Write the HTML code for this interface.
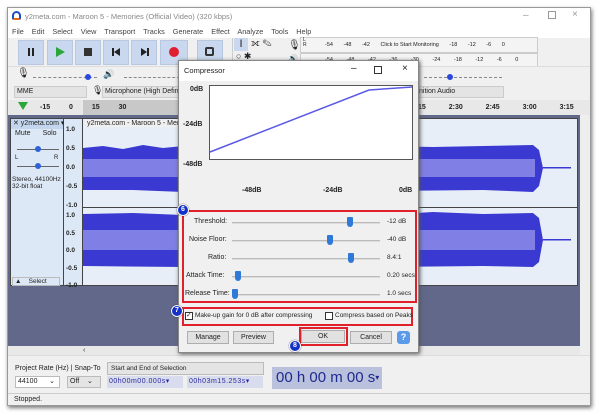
<!DOCTYPE html>
<html><head><meta charset="utf-8"><style>
*{box-sizing:border-box;margin:0;padding:0}
body{width:600px;height:416px;background:#fff;position:relative;overflow:hidden;font-family:"Liberation Sans",sans-serif;font-size:7px;color:#222}
.a{position:absolute;white-space:nowrap}
.btn{position:absolute;top:40px;width:26px;height:25px;background:#c9d8ee;border:1px solid #b8c8e0}
.rb{position:absolute;border:2px solid #e0202a}
.badge{position:absolute;width:12px;height:12px;border-radius:50%;background:#1330c8;border:1.5px solid #fff;color:#fff;font-size:7px;font-weight:bold;text-align:center;line-height:9px;box-shadow:0 0 1px #000}
.sl{position:absolute;height:2px;background:#ddd;border-top:1px solid #bbb}
.th{position:absolute;width:6px;height:10px;background:#2f7ad8;border-radius:1px 1px 3px 3px}
.db{position:absolute;height:13px;border:1px solid #adadad;background:#e1e1e1;font-size:7px;text-align:center;line-height:11px}
</style></head><body>
<div class="a" style="left:7px;top:7px;width:584px;height:399px;background:#f0f0f0;box-shadow:1px 2px 4px #777;border:1px solid #999"></div>
<!-- title -->
<div class="a" style="left:8px;top:8px;width:582px;height:17px;background:#fff"></div>
<div class="a" style="left:12px;top:11px;width:9px;height:9px;border-radius:50% 50% 2px 2px;border:2px solid #1e4fbf;border-bottom-color:#e56a1a"></div>
<div class="a" style="left:25px;top:12px;color:#888;font-size:7.5px">y2meta.com - Maroon 5 - Memories (Official Video) (320 kbps)</div>
<div class="a" style="left:523px;top:10px;color:#999;font-size:10px">–</div>
<div class="a" style="left:548px;top:11px;width:8px;height:8px;border:1px solid #999"></div>
<div class="a" style="left:572px;top:9px;color:#999;font-size:10px">×</div>
<div class="a" style="left:8px;top:25px;width:582px;height:13px;background:#fff"></div>
<div class="a" style="left:12px;top:27px;font-size:7.3px;color:#444;word-spacing:6px">File Edit Select View Transport Tracks Generate Effect Analyze Tools Help</div>
<!-- toolbar -->
<div class="btn" style="left:18px"></div><div class="a" style="left:28px;top:48px;width:2px;height:8px;background:#222;box-shadow:4px 0 #222"></div>
<div class="btn" style="left:47px"></div><div class="a" style="left:56px;top:47px;border-left:9px solid #2aa63a;border-top:5px solid transparent;border-bottom:5px solid transparent"></div>
<div class="btn" style="left:75px"></div><div class="a" style="left:84px;top:48px;width:8px;height:8px;background:#333"></div>
<div class="btn" style="left:103px"></div><div class="a" style="left:112px;top:48px;width:2px;height:8px;background:#222"></div><div class="a" style="left:114px;top:48px;border-right:6px solid #222;border-top:4px solid transparent;border-bottom:4px solid transparent"></div>
<div class="btn" style="left:131px"></div><div class="a" style="left:141px;top:48px;border-left:6px solid #222;border-top:4px solid transparent;border-bottom:4px solid transparent"></div><div class="a" style="left:147px;top:48px;width:2px;height:8px;background:#222"></div>
<div class="btn" style="left:160px;width:28px"></div><div class="a" style="left:169px;top:47px;width:10px;height:10px;border-radius:50%;background:#e02030"></div>
<div class="btn" style="left:197px"></div><div class="a" style="left:205px;top:47px;width:9px;height:9px;border:2px solid #333;border-radius:2px"></div>
<div class="a" style="left:232px;top:38px;width:1px;height:28px;background:#ccc"></div>
<div class="a" style="left:234px;top:38px;width:14px;height:13px;background:#c9d8ee;font-size:11px;text-align:center">I</div>
<div class="a" style="left:251px;top:38px;font-size:10px">⟗ ✎</div>
<div class="a" style="left:236px;top:51px;font-size:9px">○ ✱</div>
<div class="a" style="left:288px;top:40px;font-size:10px">🎙</div>
<div class="a" style="left:288px;top:54px;font-size:8px">🔊</div>
<!-- meters -->
<div class="a" style="left:300px;top:37px;width:238px;height:16px;border:1px solid #ccc;background:#f4f4f4"></div>
<div class="a" style="left:300px;top:53px;width:238px;height:14px;border:1px solid #ccc;background:#f4f4f4"></div>
<div class="a" style="left:325px;top:42px;font-size:5.5px;word-spacing:9px">-54 -48 -42 <span style="word-spacing:0">Click to Start Monitoring</span> -18 -12 -6 0</div>
<div class="a" style="left:303px;top:38px;font-size:5px;line-height:5px">L<br>R</div>
<div class="a" style="left:325px;top:57px;font-size:5.5px;word-spacing:12px">-54 -48 -42 -36 -30 -24 -18 -12 -6 0</div>
<!-- row 2 -->
<div class="a" style="left:8px;top:66px;width:582px;height:1px;background:#ddd"></div>
<div class="a" style="left:17px;top:68px;font-size:10px">🎙</div>
<div class="a" style="left:33px;top:77px;width:64px;border-top:1px dashed #888"></div>
<div class="a" style="left:85px;top:74px;width:6px;height:6px;border-radius:50%;background:#2848e0"></div>
<div class="a" style="left:103px;top:69px;font-size:9px">🔊</div>
<div class="a" style="left:124px;top:77px;width:56px;border-top:1px dashed #888"></div>
<div class="a" style="left:424px;top:77px;width:78px;border-top:1px dashed #888"></div>
<div class="a" style="left:447px;top:74px;width:6px;height:6px;border-radius:50%;background:#2848e0"></div>
<div class="a" style="left:14px;top:86px;width:73px;height:12px;background:#e4e4e4;border:1px solid #ccc;padding-left:2px;font-size:7px;line-height:10px">MME</div>
<div class="a" style="left:92px;top:85px;font-size:9px">🎙</div>
<div class="a" style="left:102px;top:86px;width:77px;height:12px;background:#e4e4e4;border:1px solid #ccc;padding-left:2px;font-size:7px;line-height:10px;overflow:hidden">Microphone (High Definiti</div>
<div class="a" style="left:418px;top:86px;width:86px;height:12px;background:#e4e4e4;border:1px solid #ccc;font-size:7px;line-height:10px">nition Audio</div>
<!-- ruler -->
<div class="a" style="left:8px;top:100px;width:582px;height:15px;background:#e8e8e8"></div>
<div class="a" style="left:83px;top:100px;width:96px;height:15px;background:#c8c8c8"></div>
<div class="a" style="left:18px;top:102px;border-top:8px solid #2aa63a;border-left:5px solid transparent;border-right:5px solid transparent"></div>
<div class="a" style="left:40px;top:104px;font-size:7px;font-weight:bold;word-spacing:17px">-15 0 15 30</div>
<div class="a" style="left:418px;top:104px;font-size:7px;font-weight:bold;word-spacing:21px">15 2:30 2:45 3:00 3:15</div>
<!-- track area -->
<div class="a" style="left:8px;top:115px;width:572px;height:231px;background:#62688a"></div>
<div class="a" style="left:580px;top:115px;width:10px;height:240px;background:#eee"></div>
<div class="a" style="left:10px;top:118px;width:54px;height:168px;background:#dde8f6;border:1px solid #444"></div>
<div class="a" style="left:11px;top:119px;width:52px;height:10px;background:#c4d6ee;font-size:7px;line-height:10px;padding-left:2px">✕ y2meta.com ▾</div>
<div class="a" style="left:12px;top:130px;width:50px;font-size:7px"><span style="margin-left:3px">Mute</span><span style="margin-left:12px">Solo</span></div>
<div class="a" style="left:17px;top:149px;width:42px;height:1px;background:#666"></div><div class="a" style="left:35px;top:146px;width:6px;height:6px;border-radius:50%;background:#2f62d8"></div>
<div class="a" style="left:17px;top:166px;width:42px;height:1px;background:#666"></div><div class="a" style="left:35px;top:163px;width:6px;height:6px;border-radius:50%;background:#2f62d8"></div>
<div class="a" style="left:15px;top:155px;font-size:6px">L</div><div class="a" style="left:54px;top:155px;font-size:6px">R</div>
<div class="a" style="left:12px;top:176px;font-size:6.5px;line-height:7px">Stereo, 44100Hz<br>32-bit float</div>
<div class="a" style="left:12px;top:277px;width:48px;height:9px;border:1px solid #bbb;font-size:6.5px;line-height:8px;padding-left:2px">▲ &nbsp;&nbsp;&nbsp;Select</div>
<div class="a" style="left:64px;top:118px;width:18px;height:168px;background:#dde8f6;border-top:1px solid #444;border-bottom:1px solid #444"></div>
<div class="a" style="left:66px;top:120px;font-size:6.5px;font-weight:bold;line-height:19px">1.0<br>0.5<br>0.0<br>-0.5<br>-1.0</div>
<div class="a" style="left:66px;top:207px;font-size:6.5px;font-weight:bold;line-height:17.5px">1.0<br>0.5<br>0.0<br>-0.5<br>-1.0</div>
<div class="a" style="left:82px;top:118px;width:496px;height:168px;background:#e8eef8;border:1px solid #444"></div>
<div class="a" style="left:82px;top:207px;width:496px;height:1px;background:#444"></div>
<div class="a" style="left:85px;top:120px;font-size:7px;background:#f0f0f0;padding:0 2px">y2meta.com - Maroon 5 - Memories</div>
<svg class="a" style="left:83px;top:130px" width="495" height="155">
<g fill="#3a3ad2">
<path d="M0 18 L20 16 L40 19 L60 15 L80 18 L100 16 L150 17 L200 15 L250 18 L300 16 L350 17 L400 16 L450 15 L456 20 L460 38 L456 56 L450 62 L400 60 L300 61 L200 60 L100 62 L50 60 L0 60 Z"/>
<path d="M0 84 L50 83 L100 85 L150 82 L200 84 L250 83 L300 85 L350 82 L400 84 L450 83 L456 88 L460 110 L456 132 L450 137 L400 136 L300 137 L200 135 L100 137 L0 136 Z"/>
</g>
<g fill="#7f7fe6"><rect x="0" y="29" width="452" height="18"/><rect x="0" y="100" width="452" height="20"/></g>
<rect x="460" y="37" width="28" height="1.5" fill="#3a3ad2"/><rect x="460" y="109" width="28" height="1.5" fill="#3a3ad2"/>
</svg>
<!-- hscroll -->
<div class="a" style="left:8px;top:346px;width:572px;height:9px;background:#e8e8e8;font-size:7px;padding-left:75px;line-height:9px">‹</div>
<!-- bottom toolbar -->
<div class="a" style="left:8px;top:355px;width:582px;height:38px;background:#f0f0f0;border-top:1px solid #ddd"></div>
<div class="a" style="left:15px;top:365px;font-size:7px">Project Rate (Hz) | Snap-To</div>
<div class="a" style="left:15px;top:376px;width:45px;height:12px;background:#fff;border:1px solid #bbb;font-size:7px;line-height:10px;padding-left:2px">44100 &nbsp;&nbsp;&nbsp;&nbsp;&nbsp;⌄</div>
<div class="a" style="left:67px;top:376px;width:34px;height:12px;background:#e4e4e4;border:1px solid #bbb;font-size:7px;line-height:10px;padding-left:2px">Off &nbsp;&nbsp;&nbsp;⌄</div>
<div class="a" style="left:107px;top:362px;width:157px;height:13px;background:#e4e4e4;border:1px solid #bbb;font-size:6.5px;line-height:11px;padding-left:3px">Start and End of Selection</div>
<div class="a" style="left:107px;top:376px;width:76px;height:12px;background:#d8dcec;color:#2a2aa0;font-size:7px;line-height:12px;padding-left:2px;letter-spacing:0.5px">00h00m00.000s▾</div>
<div class="a" style="left:187px;top:376px;width:76px;height:12px;background:#d8dcec;color:#2a2aa0;font-size:7px;line-height:12px;padding-left:2px;letter-spacing:0.5px">00h03m15.253s▾</div>
<div class="a" style="left:272px;top:367px;width:110px;height:22px;background:#b9c1dd;color:#1e2a90;font-size:15px;line-height:22px;padding-left:4px">00 h 00 m 00 s<span style="font-size:8px;vertical-align:top">▾</span></div>
<div class="a" style="left:8px;top:393px;width:582px;height:12px;background:#f0f0f0;border-top:1px solid #ccc;font-size:7px;padding:2px 0 0 6px">Stopped.</div>
<!-- dialog -->
<div class="a" style="left:178px;top:60px;width:241px;height:293px;background:#f0f0f0;border:1px solid #888;box-shadow:1px 1px 4px #555"></div>
<div class="a" style="left:179px;top:61px;width:239px;height:20px;background:#fff"></div>
<div class="a" style="left:184px;top:66px;font-size:7.5px">Compressor</div>
<div class="a" style="left:351px;top:63px;font-size:10px">–</div>
<div class="a" style="left:374px;top:66px;width:8px;height:8px;border:1px solid #333"></div>
<div class="a" style="left:402px;top:63px;font-size:10px">×</div>
<div class="a" style="left:209px;top:85px;width:204px;height:75px;background:#fff;border:1px solid #555"></div>
<svg class="a" style="left:209px;top:85px" width="204" height="75"><polyline points="1,67 160,5 203,2" fill="none" stroke="#5a5ae6" stroke-width="1.5"/></svg>
<div class="a" style="left:190px;top:86px;font-size:7px;font-weight:bold">0dB</div>
<div class="a" style="left:183px;top:121px;font-size:7px;font-weight:bold">-24dB</div>
<div class="a" style="left:183px;top:161px;font-size:7px;font-weight:bold">-48dB</div>
<div class="a" style="left:242px;top:187px;font-size:7px;font-weight:bold">-48dB</div>
<div class="a" style="left:323px;top:187px;font-size:7px;font-weight:bold">-24dB</div>
<div class="a" style="left:399px;top:187px;font-size:7px;font-weight:bold">0dB</div>
<!-- sliders -->
<div class="a" style="left:194px;top:218px;font-size:7px">Threshold:</div>
<div class="a" style="left:189px;top:236px;font-size:7px">Noise Floor:</div>
<div class="a" style="left:208px;top:254px;font-size:7px">Ratio:</div>
<div class="a" style="left:186px;top:272px;font-size:7px">Attack Time:</div>
<div class="a" style="left:185px;top:290px;font-size:7px">Release Time:</div>
<div class="sl" style="left:232px;top:222px;width:148px"></div>
<div class="sl" style="left:232px;top:240px;width:148px"></div>
<div class="sl" style="left:232px;top:258px;width:148px"></div>
<div class="sl" style="left:232px;top:276px;width:148px"></div>
<div class="sl" style="left:232px;top:294px;width:148px"></div>
<div class="th" style="left:347px;top:217px"></div>
<div class="th" style="left:327px;top:235px"></div>
<div class="th" style="left:348px;top:253px"></div>
<div class="th" style="left:235px;top:271px"></div>
<div class="th" style="left:232px;top:289px"></div>
<div class="a" style="left:387px;top:218px;font-size:6.5px">-12 dB</div>
<div class="a" style="left:387px;top:236px;font-size:6.5px">-40 dB</div>
<div class="a" style="left:387px;top:254px;font-size:6.5px">8.4:1</div>
<div class="a" style="left:387px;top:272px;font-size:6.5px">0.20 secs</div>
<div class="a" style="left:387px;top:290px;font-size:6.5px">1.0 secs</div>
<div class="rb" style="left:182px;top:210px;width:235px;height:93px"></div>
<div class="rb" style="left:182px;top:307px;width:231px;height:19px"></div>
<div class="a" style="left:185px;top:312px;width:8px;height:8px;background:#fff;border:1px solid #333;font-size:7px;line-height:6px">✓</div>
<div class="a" style="left:195px;top:312px;font-size:6.5px">Make-up gain for 0 dB after compressing</div>
<div class="a" style="left:325px;top:312px;width:8px;height:8px;background:#fff;border:1px solid #333"></div>
<div class="a" style="left:335px;top:312px;font-size:6.5px">Compress based on Peaks</div>
<div class="db" style="left:187px;top:331px;width:42px">Manage</div>
<div class="db" style="left:233px;top:331px;width:41px">Preview</div>
<div class="db" style="left:301px;top:330px;width:44px">OK</div>
<div class="db" style="left:350px;top:331px;width:42px">Cancel</div>
<div class="a" style="left:397px;top:331px;width:13px;height:13px;border-radius:3px;background:#5a9ae8;color:#fff;font-weight:bold;font-size:9px;text-align:center;line-height:13px">?</div>
<div class="rb" style="left:299px;top:327px;width:49px;height:19px"></div>
<div class="badge" style="left:177px;top:204px">6</div>
<div class="badge" style="left:171px;top:305px">7</div>
<div class="badge" style="left:289px;top:340px">8</div>
</body></html>
